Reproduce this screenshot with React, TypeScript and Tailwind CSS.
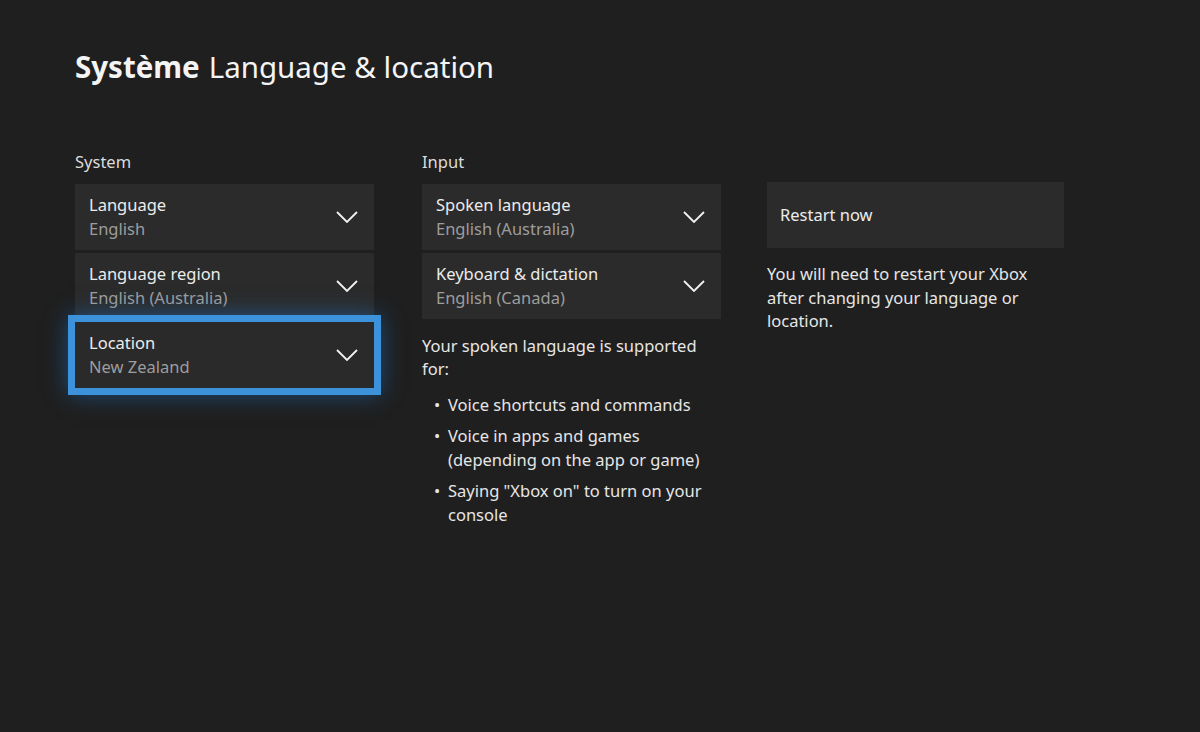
import { ReactNode } from "react";

function Chevron() {
    return (
        <svg width="22" height="12" viewBox="0 0 22 12" fill="none" className="shrink-0">
            <path d="M1 1L11 11L21 1" stroke="#f2f2f2" strokeWidth="1.8" strokeLinejoin="miter" />
        </svg>
    );
}

function Dropdown({ title, value, focused }: { title: string; value: string; focused?: boolean }) {
    return (
        <div
            className={
                focused
                    ? "flex h-[66px] items-center justify-between bg-[#2a2a2a] pl-[14px] pr-[16px] outline-[7px] outline-solid outline-[#3c93dc] shadow-[0_0_22px_6px_rgba(30,120,210,0.55)] relative z-10"
                    : "flex h-[66px] items-center justify-between bg-[#2b2b2b] pl-[14px] pr-[16px]"
            }
        >
            <div className="flex flex-col">
                <span className="text-[16.5px] leading-[24px] text-[#ececec]">{title}</span>
                <span className="text-[16.5px] leading-[24px] text-[#9d9d9d]">{value}</span>
            </div>
            <Chevron />
        </div>
    );
}

function Section({ label, children }: { label: string; children: ReactNode }) {
    return (
        <div className="flex w-[299px] flex-col">
            <div className="mb-[10px] h-[24px] text-[16.5px] leading-[24px] text-[#dcdcdc]">{label}</div>
            <div className="flex flex-col gap-[3px]">{children}</div>
        </div>
    );
}

function Bullet({ children }: { children: ReactNode }) {
    return (
        <li className="flex">
            <span className="w-[26px] pl-[12px] text-[#e6e6e6]">•</span>
            <span className="flex-1">{children}</span>
        </li>
    );
}

export default function App() {
    return (
        <div
            className="min-h-[732px] w-full bg-[#1f1f1f] pl-[75px] pt-[45px] text-[#e6e6e6]"
            style={{ fontFamily: '"Noto Sans", "Open Sans", sans-serif' }}
        >
            <h1 className="text-[29.5px] leading-[44px] text-[#f4f4f4]">
                <span className="font-bold">Système</span>
                <span className="ml-[9px]">Language &amp; location</span>
            </h1>

            <div className="mt-[61px] flex gap-[48px]">
                <Section label="System">
                    <Dropdown title="Language" value="English" />
                    <Dropdown title="Language region" value="English (Australia)" />
                    <Dropdown title="Location" value="New Zealand" focused />
                </Section>

                <div className="flex w-[297px] flex-col">
                    <Section label="Input">
                        <Dropdown title="Spoken language" value="English (Australia)" />
                        <Dropdown title="Keyboard & dictation" value="English (Canada)" />
                    </Section>
                    <p className="mt-[15px] text-[16.5px] leading-[23px]">
                        Your spoken language is supported
                        <br />
                        for:
                    </p>
                    <ul className="mt-[13px] flex flex-col gap-[7px] text-[16.5px] leading-[24px]">
                        <Bullet>Voice shortcuts and commands</Bullet>
                        <Bullet>
                            Voice in apps and games
                            <br />
                            (depending on the app or game)
                        </Bullet>
                        <Bullet>
                            Saying "Xbox on" to turn on your
                            <br />
                            console
                        </Bullet>
                    </ul>
                </div>

                <div className="flex w-[297px] flex-col pt-[32px]">
                    <button className="flex h-[66px] items-center bg-[#2b2b2b] pl-[13px] text-left text-[16.5px] text-[#ececec]">
                        Restart now
                    </button>
                    <p className="mt-[14px] text-[16.5px] leading-[23.5px]">
                        You will need to restart your Xbox
                        <br />
                        after changing your language or
                        <br />
                        location.
                    </p>
                </div>
            </div>
        </div>
    );
}
